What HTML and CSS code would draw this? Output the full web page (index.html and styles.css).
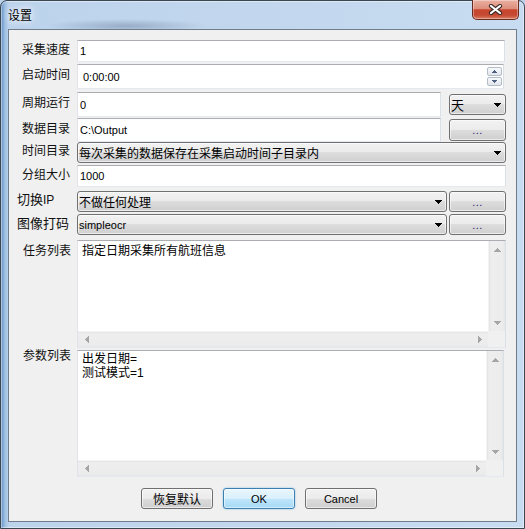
FILE: index.html
```html
<!DOCTYPE html>
<html lang="zh-CN">
<head>
<meta charset="utf-8">
<title>设置</title>
<link rel="stylesheet" href="styles.css">
</head>
<body>
<div class="window">
  <div class="titlebar">
    <span class="title">设置</span>
    <div class="close">
      <svg width="15" height="11" viewBox="0 0 15 11">
        <path d="M3 2 L12 9 M12 2 L3 9" stroke="#3a2a28" stroke-width="4.2" stroke-linecap="round" fill="none"/>
        <path d="M3 2 L12 9 M12 2 L3 9" stroke="#ffffff" stroke-width="2.2" stroke-linecap="round" fill="none"/>
      </svg>
    </div>
  </div>
  <div class="client">
    <div class="row r1">
      <span class="lbl">采集速度</span>
      <div class="tb w428 h22"><span class="val">1</span></div>
    </div>
    <div class="row r2">
      <span class="lbl">启动时间</span>
      <div class="tb dtp w427 h25">
        <span class="val">0:00:00</span>
        <div class="spin">
          <div class="spinbtn"><svg width="5" height="3" viewBox="0 0 5 3"><path d="M2 0H3V1H4V2H5V3H0V2H1V1H2Z" fill="#4c5f80"/></svg></div>
          <div class="spinbtn"><svg width="5" height="3" viewBox="0 0 5 3"><path d="M0 0H5V1H4V2H3V3H2V2H1V1H0Z" fill="#4c5f80"/></svg></div>
        </div>
      </div>
    </div>
    <div class="row r3">
      <span class="lbl">周期运行</span>
      <div class="tb w364 h25"><span class="val">0</span></div>
      <div class="cb w57 h21 gap8">
        <span class="cbtext big">天</span>
        <svg class="arrow" width="7" height="4" viewBox="0 0 7 4"><path d="M0 0H7V1H6V2H5V3H4V4H3V3H2V2H1V1H0Z" fill="#000"/></svg>
      </div>
    </div>
    <div class="row r4">
      <span class="lbl">数据目录</span>
      <div class="tb w364 h24"><span class="val">C:\Output</span></div>
      <div class="btn3 w57 h22 gap8">...</div>
    </div>
    <div class="row r5">
      <span class="lbl">时间目录</span>
      <div class="cb w429 h21">
        <span class="cbtext">每次采集的数据保存在采集启动时间子目录内</span>
        <svg class="arrow" width="7" height="4" viewBox="0 0 7 4"><path d="M0 0H7V1H6V2H5V3H4V4H3V3H2V2H1V1H0Z" fill="#000"/></svg>
      </div>
    </div>
    <div class="row r6">
      <span class="lbl">分组大小</span>
      <div class="tb w429 h22"><span class="val">1000</span></div>
    </div>
    <div class="row r7">
      <span class="lbl lbl-lg">切换<span class="ip">IP</span></span>
      <div class="cb w370 h21">
        <span class="cbtext">不做任何处理</span>
        <svg class="arrow" width="7" height="4" viewBox="0 0 7 4"><path d="M0 0H7V1H6V2H5V3H4V4H3V3H2V2H1V1H0Z" fill="#000"/></svg>
      </div>
      <div class="btn3 w57 h21 gap2">...</div>
    </div>
    <div class="row r8">
      <span class="lbl lbl-lg">图像打码</span>
      <div class="cb w370 h21">
        <span class="cbtext latin">simpleocr</span>
        <svg class="arrow" width="7" height="4" viewBox="0 0 7 4"><path d="M0 0H7V1H6V2H5V3H4V4H3V3H2V2H1V1H0Z" fill="#000"/></svg>
      </div>
      <div class="btn3 w57 h21 gap2">...</div>
    </div>
    <div class="row r9">
      <span class="lbl lbl-top1">任务列表</span>
      <div class="ta w429 h108">
        <div class="tatext tat1">指定日期采集所有航班信息</div>
        <div class="vs">
          <span class="sbtn"><svg width="7" height="4" viewBox="0 0 7 4"><path d="M3 0H4V1H5V2H6V3H7V4H0V3H1V2H2V1H3Z" fill="#a6a6a6"/></svg></span>
          <span class="sbtn"><svg width="7" height="4" viewBox="0 0 7 4"><path d="M0 0H7V1H6V2H5V3H4V4H3V3H2V2H1V1H0Z" fill="#a6a6a6"/></svg></span>
        </div>
        <div class="hs">
          <span class="sbtn"><svg width="4" height="7" viewBox="0 0 4 7"><path d="M3 0H4V7H3V6H2V5H1V4H0V3H1V2H2V1H3Z" fill="#a6a6a6"/></svg></span>
          <span class="sbtn"><svg width="4" height="7" viewBox="0 0 4 7"><path d="M0 0H1V1H2V2H3V3H4V4H3V5H2V6H1V7H0Z" fill="#a6a6a6"/></svg></span>
        </div>
        <div class="corner"></div>
      </div>
    </div>
    <div class="row r10">
      <span class="lbl lbl-top2">参数列表</span>
      <div class="ta w427 h127">
        <div class="tatext tat2"><div>出发日期=</div><div>测试模式=1</div></div>
        <div class="vs">
          <span class="sbtn"><svg width="7" height="4" viewBox="0 0 7 4"><path d="M3 0H4V1H5V2H6V3H7V4H0V3H1V2H2V1H3Z" fill="#a6a6a6"/></svg></span>
          <span class="sbtn"><svg width="7" height="4" viewBox="0 0 7 4"><path d="M0 0H7V1H6V2H5V3H4V4H3V3H2V2H1V1H0Z" fill="#a6a6a6"/></svg></span>
        </div>
        <div class="hs">
          <span class="sbtn"><svg width="4" height="7" viewBox="0 0 4 7"><path d="M3 0H4V7H3V6H2V5H1V4H0V3H1V2H2V1H3Z" fill="#a6a6a6"/></svg></span>
          <span class="sbtn"><svg width="4" height="7" viewBox="0 0 4 7"><path d="M0 0H1V1H2V2H3V3H4V4H3V5H2V6H1V7H0Z" fill="#a6a6a6"/></svg></span>
        </div>
        <div class="corner"></div>
      </div>
    </div>
    <div class="actions">
      <div class="btn">恢复默认</div>
      <div class="btn btn-default latin">OK</div>
      <div class="btn latin">Cancel</div>
    </div>
  </div>
</div>
</body>
</html>
```

FILE: styles.css
```css
* { box-sizing: border-box; }
html, body { margin: 0; padding: 0; }
body {
  width: 525px;
  height: 529px;
  overflow: hidden;
  background: #bcd3ec;
  font-family: "Noto Sans CJK SC", "Liberation Sans", sans-serif;
  font-size: 12px;
  color: #000;
}

.window {
  width: 525px;
  height: 529px;
  border: 1px solid #3b4653;
  border-radius: 7px 7px 0 0;
  padding: 0 7px 6px 7px;
  display: flex;
  flex-direction: column;
  background:
    radial-gradient(ellipse 80px 7px at 125px 25px, rgba(80, 100, 125, 0.35), rgba(80, 100, 125, 0)),
    linear-gradient(to right, #5f8fc4 0px, #9fc0e3 4px, #bcd3ec 8px, #c3d8ee 60%, #c8dcf1 100%);
  box-shadow: inset 0 0 0 1px rgba(255, 255, 255, 0.45);
}

.titlebar {
  height: 28px;
  flex-shrink: 0;
  display: flex;
  align-items: flex-start;
  justify-content: space-between;
}
.title {
  margin-top: 6px;
  line-height: 16px;
  font-size: 12px;
  text-shadow: 0 0 6px #fff, 0 0 10px rgba(255, 255, 255, 0.8);
}
.close {
  width: 47px;
  height: 20px;
  margin-top: -1px;
  margin-right: -2px;
  border: 1px solid #6b2a20;
  border-top: none;
  border-radius: 0 0 5px 5px;
  background: linear-gradient(#eab0a2 0%, #dd8f7c 45%, #c8452d 52%, #c54a33 80%, #da7d64 100%);
  box-shadow: inset 0 0 0 1px rgba(255, 255, 255, 0.35);
  display: flex;
  align-items: center;
  justify-content: center;
}

.client {
  flex: 1;
  border: 1px solid #6f7d8c;
  background: #f0f0f0;
  padding-top: 10px;
  display: flex;
  flex-direction: column;
}

.row { display: flex; align-items: center; flex-shrink: 0; }
.r2 { margin-top: 2px; }
.r3 { margin-top: 3px; }
.r4 { margin-top: 1px; }
.r5 { margin-top: 0; }
.r6 { margin-top: 2px; }
.r7 { margin-top: 4px; }
.r8 { margin-top: 2px; }
.r9 { margin-top: 5px; align-items: flex-start; }
.r10 { margin-top: 2px; align-items: flex-start; }

.lbl {
  width: 68px;
  flex-shrink: 0;
  padding-left: 13px;
  padding-bottom: 5px;
  line-height: 16px;
  white-space: nowrap;
  color: #111;
}
.lbl-lg { font-size: 13px; padding-left: 8px; padding-bottom: 4px; }
.ip { font-family: "Liberation Sans", sans-serif; font-size: 12px; }
.lbl-top1 { padding-bottom: 0; margin-top: 2px; padding-left: 14px; }
.lbl-top2 { padding-bottom: 0; margin-top: -3px; padding-left: 14px; }

.w57 { width: 57px; }
.w364 { width: 364px; }
.w370 { width: 370px; }
.w427 { width: 427px; }
.w428 { width: 428px; }
.w429 { width: 429px; }
.h21 { height: 21px; }
.h22 { height: 22px; }
.h24 { height: 24px; }
.h25 { height: 25px; }
.h108 { height: 108px; }
.h127 { height: 127px; }
.gap8 { margin-left: 8px; }
.gap2 { margin-left: 2px; }

.tb {
  flex-shrink: 0;
  background: #fff;
  border: 1px solid;
  border-color: #abadb3 #dbdfe6 #e3e9ef #e2e3ea;
  display: flex;
  align-items: center;
  padding-left: 2px;
  font-family: "Liberation Sans", sans-serif;
  font-size: 11px;
}
.dtp { padding-left: 5px; padding-right: 1px; justify-content: space-between; }
.spin { display: flex; flex-direction: column; gap: 1px; }
.spinbtn {
  width: 15px;
  height: 9px;
  border: 1px solid #b3bdc8;
  border-radius: 2px;
  background: linear-gradient(#f8fafc, #e1e6ec);
  display: flex;
  align-items: center;
  justify-content: center;
}
.spinbtn svg { display: block; }

.cb, .btn3, .btn {
  flex-shrink: 0;
  border: 1px solid #707070;
  border-radius: 3px;
  background: linear-gradient(#f2f2f2 0%, #ebebeb 50%, #dddddd 50%, #cfcfcf 100%);
  box-shadow: inset 0 0 0 1px rgba(255, 255, 255, 0.6);
}
.cb {
  display: flex;
  align-items: center;
  justify-content: space-between;
  padding: 0 4px 0 1px;
}
.cbtext { line-height: 16px; white-space: nowrap; }
.cbtext.big { font-size: 13px; }
.latin { font-family: "Liberation Sans", sans-serif; font-size: 11px; }
.arrow { display: block; flex-shrink: 0; }

.btn3 {
  display: flex;
  align-items: center;
  justify-content: center;
  font-family: "Liberation Sans", sans-serif;
  font-size: 11px;
  color: #1c1570;
  letter-spacing: 0.5px;
}

.ta {
  flex-shrink: 0;
  display: grid;
  grid-template-columns: 1fr 17px;
  grid-template-rows: 1fr 16px;
  border: 1px solid;
  border-color: #abadb3 #dbdfe6 #e3e9ef #e2e3ea;
  background: #fff;
}
.tatext { padding-left: 4px; line-height: 14px; font-size: 12px; white-space: nowrap; }
.tat1 { padding-top: 2px; }
.tat2 {
  padding-top: 1px;
  font-family: "Liberation Sans", "Noto Sans CJK SC", sans-serif;
}
.tat2 div { height: 14px; line-height: 14px; }
.vs {
  display: flex;
  flex-direction: column;
  justify-content: space-between;
  background: linear-gradient(to right, #e2e2e2 0, #eeeeee 2px, #ececec 14px, #e4e4e4 100%);
  border-left: 1px solid #f4f4f4;
}
.hs {
  display: flex;
  justify-content: space-between;
  background: linear-gradient(#e4e4e4 0, #eeeeee 2px, #ececec 13px, #e6e6e6 100%);
  border-top: 1px solid #f4f4f4;
}
.vs .sbtn { height: 17px; display: flex; align-items: center; justify-content: center; }
.hs .sbtn { width: 17px; display: flex; align-items: center; justify-content: center; }
.sbtn svg { display: block; }
.corner { background: #f0f0f0; }

.actions {
  display: flex;
  gap: 10px;
  padding-left: 132px;
  margin-top: 11px;
}
.btn {
  width: 72px;
  height: 21px;
  display: flex;
  align-items: center;
  justify-content: center;
  line-height: 16px;
}
.btn-default {
  border-color: #3c7fb1;
  background: linear-gradient(#eaf6fd 0%, #d9f0fc 50%, #bee6fd 50%, #a7d9f5 100%);
  box-shadow: inset 0 0 0 1px rgba(255, 255, 255, 0.5), 0 0 2px rgba(60, 160, 230, 0.6);
}
```
